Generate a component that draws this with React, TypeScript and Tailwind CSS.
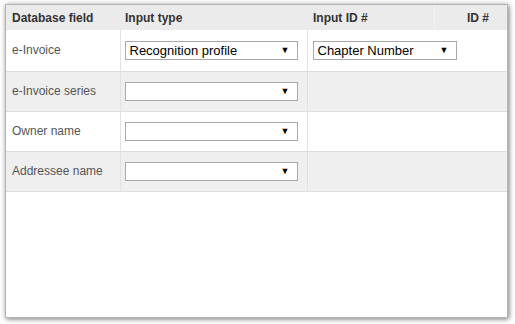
import React from 'react';

const rows = [
  { label: 'e-Invoice', type: 'Recognition profile', id: 'Chapter Number' },
  { label: 'e-Invoice series', type: '', id: null },
  { label: 'Owner name', type: '', id: null },
  { label: 'Addressee name', type: '', id: null },
];

function Dropdown({ value, width }: { value: string; width: string }) {
  return (
    <div className={`flex h-[19px] items-center justify-between border border-[#a9a9a9] bg-white pl-[4px] pr-[7px] text-[13px] text-black ${width}`}>
      <span>{value}</span>
      <span className="text-[9px] leading-none">▼</span>
    </div>
  );
}

export default function App() {
  return (
    <div className="h-[324px] w-[515px] bg-white font-['Liberation_Sans',Arial,sans-serif]">
      <div className="ml-[5px] pt-[4px]">
        <div className="h-[314px] w-[503px] border border-[#b5b5b5] bg-white shadow-[1px_1px_5px_rgba(0,0,0,0.55)]">
          <table className="w-full border-collapse">
            <thead>
              <tr className="h-[25px] bg-[#ebebeb] text-left text-[12px] font-bold text-[#333]">
                <th className="w-[114px] pl-[6px] font-bold">Database field</th>
                <th className="w-[187px] pl-[5px] font-bold">Input type</th>
                <th className="w-[127px] border-r border-[#f4f4f4] pl-[6px] font-bold">Input ID #</th>
                <th className="pr-[18px] text-right font-bold">ID #</th>
              </tr>
            </thead>
            <tbody>
              {rows.map((r, i) => (
                <tr
                  key={r.label}
                  className={`${i === 0 ? 'h-[41px]' : 'h-[40px]'} border-b border-[#dedede] text-[12px] text-[#555] ${i % 2 === 1 ? 'bg-[#efefef]' : 'bg-white'}`}
                >
                  <td className="border-r border-[#e2e2e2] pl-[6px]">{r.label}</td>
                  <td className="border-r border-[#e2e2e2] pl-[4px]">
                    <Dropdown value={r.type} width="w-[173px]" />
                  </td>
                  <td className="pl-[5px]" colSpan={2}>
                    {r.id !== null && <Dropdown value={r.id} width="w-[144px]" />}
                  </td>
                </tr>
              ))}
            </tbody>
          </table>
        </div>
      </div>
    </div>
  );
}
